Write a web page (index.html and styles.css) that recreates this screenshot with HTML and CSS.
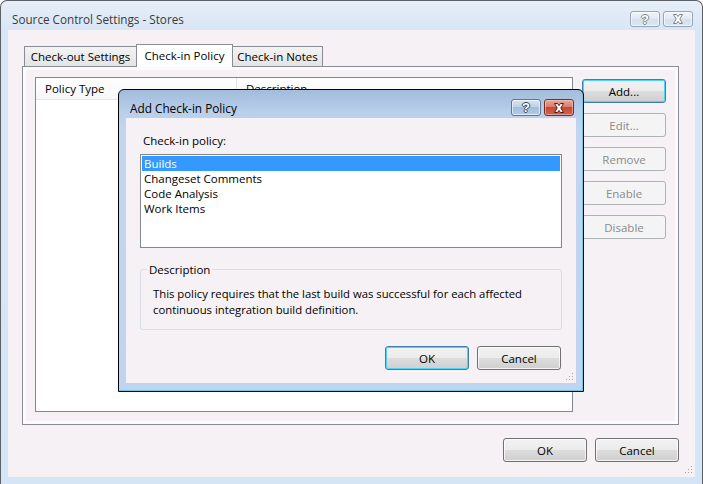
FILE: index.html
```html
<!DOCTYPE html>
<html lang="en">
<head>
  <meta charset="UTF-8" />
  <title>Source Control Settings - Stores</title>
  <link rel="stylesheet" href="styles.css">
</head>
<body>

  <div class="window">
    <div class="titlebar">
      <span class="title">Source Control Settings - Stores</span>
      <div class="caption">
        <span class="cap-btn cap-help">?</span>
        <span class="cap-btn cap-close">
          <svg width="12" height="10" viewBox="0 0 12 10"><path d="M1.5 .5H4.5L6 2.6 7.5 .5H10.5L7.8 5 10.5 9.5H7.5L6 7.4 4.5 9.5H1.5L4.2 5Z" /></svg>
        </span>
      </div>
    </div>

    <div class="client">
      <div class="tabs">
        <div class="tab tab-first">Check-out Settings</div>
        <div class="tab active">Check-in Policy</div>
        <div class="tab tab-last">Check-in Notes</div>
      </div>

      <div class="panel">
        <div class="listview">
          <div class="lv-header">
            <div class="lv-col lv-col-type">Policy Type</div>
            <div class="lv-col">Description</div>
          </div>
        </div>
        <div class="side-buttons">
          <button class="btn btn-default">Add...</button>
          <button class="btn" disabled>Edit...</button>
          <button class="btn" disabled>Remove</button>
          <button class="btn" disabled>Enable</button>
          <button class="btn" disabled>Disable</button>
        </div>
      </div>

      <div class="footer">
        <button class="btn">OK</button>
        <button class="btn">Cancel</button>
      </div>

      <svg class="grip" width="8" height="8" viewBox="0 0 8 8">
        <rect x="6" y="0" width="1" height="1" /><rect x="3" y="3" width="1" height="1" /><rect x="6" y="3" width="1" height="1" />
        <rect x="0" y="6" width="1" height="1" /><rect x="3" y="6" width="1" height="1" /><rect x="6" y="6" width="1" height="1" />
      </svg>
    </div>

    <!-- ventana modal encima -->
    <div class="dialog">
      <div class="dlg-titlebar">
        <span class="dlg-title">Add Check-in Policy</span>
        <div class="caption">
          <span class="cap-btn dlg-help">?</span>
          <span class="cap-btn dlg-close">
            <svg width="12" height="10" viewBox="0 0 12 10"><path d="M1.5 .5H4.5L6 2.6 7.5 .5H10.5L7.8 5 10.5 9.5H7.5L6 7.4 4.5 9.5H1.5L4.2 5Z" /></svg>
          </span>
        </div>
      </div>

      <div class="dlg-content">
        <div class="dlg-label">Check-in policy:</div>
        <ul class="listbox">
          <li class="selected">Builds</li>
          <li>Changeset Comments</li>
          <li>Code Analysis</li>
          <li>Work Items</li>
        </ul>

        <fieldset class="group">
          <legend>Description</legend>
          <p>This policy requires that the last build was successful for each affected continuous integration build definition.</p>
        </fieldset>

        <div class="dlg-buttons">
          <button class="btn btn-default">OK</button>
          <button class="btn">Cancel</button>
        </div>

        <svg class="grip dlg-grip" width="8" height="8" viewBox="0 0 8 8">
          <rect x="6" y="0" width="1" height="1" /><rect x="3" y="3" width="1" height="1" /><rect x="6" y="3" width="1" height="1" />
          <rect x="0" y="6" width="1" height="1" /><rect x="3" y="6" width="1" height="1" /><rect x="6" y="6" width="1" height="1" />
        </svg>
      </div>
    </div>
  </div>

</body>
</html>
```

FILE: styles.css
```css
* {
  box-sizing: border-box;
}

body {
  margin: 0;
  background: #fff;
  font-family: "Open Sans", "Noto Sans", sans-serif;
  font-size: 11.5px;
  color: #000;
}

.window {
  position: relative;
  width: 703px;
  height: 484px;
  display: flex;
  flex-direction: column;
  border: 1px solid #5b6169;
  border-bottom: none;
  border-radius: 7px 7px 0 0;
  background: linear-gradient(#e6eef7, #d9e6f5 30px, #d6e5f6);
}

.titlebar {
  height: 29px;
  flex: none;
  display: flex;
  align-items: flex-start;
  justify-content: space-between;
  padding: 10px 9px 0 11px;
}

.title {
  line-height: 16px;
  font-size: 11.7px;
  color: #3a3a3a;
}

.caption {
  display: flex;
  gap: 3px;
}

.cap-btn {
  width: 30px;
  height: 16px;
  display: flex;
  align-items: center;
  justify-content: center;
  border: 1px solid #97a5b7;
  border-radius: 3px;
  background: linear-gradient(#eef3f9, #e1e9f3 50%, #d5e0ed 50%, #dce6f1);
  box-shadow: inset 0 0 0 1px rgba(255,255,255,0.6);
  font-family: "Liberation Sans", sans-serif;
  font-weight: bold;
  font-size: 13px;
  color: #fff;
  text-shadow: 1px 0 #7c8591, -1px 0 #7c8591, 0 1px #7c8591, 0 -1px #7c8591;
}

.cap-btn svg path {
  fill: #fff;
  stroke: #7c8591;
  stroke-width: 1;
}

.client {
  flex: 1;
  position: relative;
  margin: 0 7px 7px;
  padding: 14px 16px 0 14px;
  background: #f5f1f5;
}

/* pestañas */
.tabs {
  height: 22px;
  display: flex;
  align-items: flex-end;
  padding-left: 2px;
}

.tab {
  height: 20px;
  display: flex;
  align-items: center;
  justify-content: center;
  border: 1px solid #898c95;
  border-bottom: none;
  background: linear-gradient(#f3f3f3, #e4e4e4);
}

.tab-first {
  width: 113px;
}

.tab.active {
  position: relative;
  z-index: 1;
  width: 97px;
  height: 23px;
  margin: 0 0 -1px -1px;
  padding-bottom: 1px;
  background: #fff;
}

.tab-last {
  width: 91px;
  margin-left: -1px;
}

.panel {
  height: 359px;
  display: flex;
  gap: 9px;
  padding: 10px 12px 12px;
  border: 1px solid #898c95;
  background: #f5f1f5;
  box-shadow: inset 0 0 0 3px #fcfbfc;
}

.listview {
  flex: 1;
  border: 1px solid #828790;
  background: #fff;
}

.lv-header {
  height: 22px;
  display: flex;
  border-bottom: 1px solid #e5e5e5;
  background: linear-gradient(#fff, #f6f7f9);
}

.lv-col {
  line-height: 21px;
  padding-left: 9px;
}

.lv-col-type {
  width: 201px;
  border-right: 1px solid #e3e5e8;
}

.side-buttons {
  width: 84px;
  flex: none;
  display: flex;
  flex-direction: column;
  gap: 10px;
  padding-top: 2px;
}

.btn {
  width: 84px;
  height: 24px;
  padding: 0;
  border: 1px solid #707070;
  border-radius: 3px;
  background: linear-gradient(#f2f2f2, #ebebeb 50%, #dddddd 50%, #cfcfcf);
  box-shadow: inset 0 0 0 1px rgba(255,255,255,0.75);
  font-family: inherit;
  font-size: 11.5px;
  color: #000;
}

.btn-default {
  border-color: #3c7fb1;
  box-shadow: inset 0 0 0 1px #4fd3fa;
}

.btn:disabled {
  border-color: #adb2b5;
  background: #f4f4f4;
  box-shadow: none;
  color: #8b8b8b;
}

.footer {
  display: flex;
  justify-content: flex-end;
  gap: 8px;
  margin-top: 13px;
}

.grip {
  position: absolute;
  right: 2px;
  bottom: 3px;
  fill: #a7a7a7;
}

/* dialogo */
.dialog {
  position: absolute;
  left: 117px;
  top: 88px;
  width: 466px;
  border: 1px solid #000;
  border-radius: 6px 6px 0 0;
  background: linear-gradient(#a3bcdc, #b9cfea 22px, #c2d6ef 40px, #bfd4ee);
  box-shadow: inset -1px -1px 0 #6cc8ea;
}

.dlg-titlebar {
  height: 28px;
  display: flex;
  align-items: flex-start;
  justify-content: space-between;
  padding: 9px 9px 0 11px;
}

.dlg-title {
  margin-top: 1px;
  line-height: 16px;
  font-size: 11.8px;
}

.dlg-help,
.dlg-close {
  height: 17px;
}

.dlg-help {
  border-color: #5e7797;
  background: linear-gradient(#d8e5f4, #bccfe7 50%, #a5bddd 50%, #b3cae6);
  text-shadow: 1px 0 #34465e, -1px 0 #34465e, 0 1px #34465e, 0 -1px #34465e;
}

.dlg-close {
  border-color: #7d2b22;
  background: linear-gradient(#eaa898, #d97764 50%, #c44a36 50%, #d0624d);
  box-shadow: inset 0 0 0 1px rgba(255,220,210,0.5);
}

.dlg-close svg path {
  stroke: #5a1a12;
}

.dlg-content {
  position: relative;
  margin: 0 7px 8px;
  padding: 15px 14px 13px;
  background: #f5f1f5;
}

.dlg-label {
  line-height: 15px;
  margin-bottom: 6px;
  padding-left: 3px;
}

.listbox {
  height: 94px;
  margin: 0;
  padding: 1px;
  list-style: none;
  border: 1px solid #828790;
  background: #fff;
}

.listbox li {
  line-height: 15px;
  padding-left: 2px;
}

.listbox li.selected {
  background: #3399ff;
  color: #fff;
}

.group {
  margin: 14px 0 0;
  padding: 0 6px 11px;
  border: 1px solid #d5dfe5;
  border-radius: 3px;
}

.group legend {
  padding: 0 2px;
  line-height: 15px;
}

.group p {
  margin: 9px 0 0 6px;
  line-height: 16px;
  font-size: 11.3px;
}

.dlg-buttons {
  display: flex;
  justify-content: flex-end;
  gap: 8px;
  margin-top: 16px;
  padding-right: 1px;
}

.dlg-grip {
  right: 2px;
  bottom: 2px;
}
```
